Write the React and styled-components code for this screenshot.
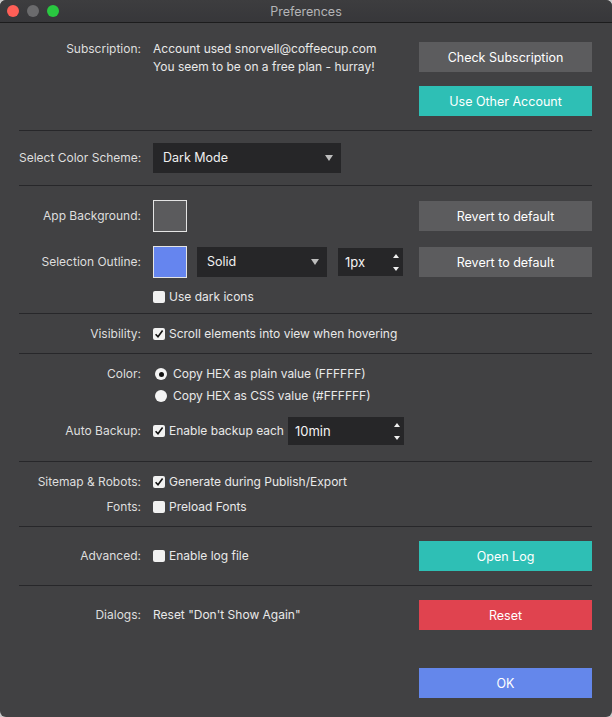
import React from "react";
import styled, { createGlobalStyle } from "styled-components";

const GlobalStyle = createGlobalStyle`
  html, body {
    margin: 0;
    padding: 0;
    background: #c9c9c9;
  }
  body {
    font-family: "Inter", "Roboto", "Liberation Sans", sans-serif;
    font-size: 12px;
    -webkit-font-smoothing: antialiased;
  }
`;

const Window = styled.div`
  width: 612px;
  height: 717px;
  box-sizing: border-box;
  background: #414143;
  border-radius: 6px;
  overflow: hidden;
  display: flex;
  flex-direction: column;
  color: #e9e9e9;
`;

const TitleBar = styled.div`
  height: 22px;
  flex: none;
  position: relative;
  display: flex;
  align-items: center;
  justify-content: center;
  background: linear-gradient(#3d3d3f, #37373a);
  border-bottom: 1px solid #1c1c1d;
`;

const Lights = styled.div`
  position: absolute;
  left: 7px;
  top: 5px;
  display: flex;
  gap: 8px;
`;

const Light = styled.span`
  width: 12px;
  height: 12px;
  border-radius: 50%;
  background: ${(p) => p.color};
`;

const Title = styled.div`
  font-size: 12.5px;
  color: #b4b4b6;
`;

const Body = styled.div`
  padding: 0 20px 0 19px;
  display: flex;
  flex-direction: column;
`;

const Section = styled.div`
  padding: ${(p) => p.pad || "12px 0"};
  display: flex;
  flex-direction: column;
  gap: ${(p) => p.gap || "0px"};
`;

const Divider = styled.div`
  height: 1px;
  background: #27272a;
`;

const Row = styled.div`
  display: grid;
  grid-template-columns: 122px 1fr 173px;
  column-gap: 12px;
  align-items: ${(p) => (p.top ? "start" : "center")};
  min-height: ${(p) => p.h || "18px"};
  margin-top: ${(p) => p.mt || "0px"};
`;

const Label = styled.div`
  grid-column: 1;
  text-align: right;
  white-space: nowrap;
  line-height: 18px;
  color: #dedede;
`;

const Field = styled.div`
  grid-column: 2;
  display: flex;
  align-items: center;
  gap: ${(p) => p.gap || "4px"};
  line-height: 18px;
  white-space: nowrap;
`;

const Lines = styled.div`
  grid-column: 2;
  line-height: 18px;
  white-space: nowrap;
`;

const Actions = styled.div`
  grid-column: 3;
  display: flex;
  flex-direction: column;
  gap: 14px;
  padding-top: ${(p) => p.offset || "0px"};
`;

const tones = {
  grey: "#5c5c5e",
  teal: "#2ebfb5",
  red: "#e0434f",
  blue: "#6487eb",
};

const Button = styled.button`
  grid-column: 3;
  height: 30px;
  width: 100%;
  border: none;
  border-radius: 0;
  background: ${(p) => tones[p.tone || "grey"]};
  color: #ffffff;
  font-family: inherit;
  font-size: 12.5px;
  font-weight: 400;
  padding: 0;
  cursor: pointer;
`;

const Select = styled.div`
  width: ${(p) => p.w}px;
  height: 30px;
  box-sizing: border-box;
  background: #262628;
  display: flex;
  align-items: center;
  justify-content: space-between;
  padding: 0 8px 0 10px;
  font-size: 12.5px;
  color: #f0f0f0;
`;

const Caret = styled.span`
  width: 0;
  height: 0;
  border-left: 4px solid transparent;
  border-right: 4px solid transparent;
  border-top: 6px solid #bdbdbd;
`;

const Spinner = styled.div`
  width: ${(p) => p.w}px;
  height: 28px;
  box-sizing: border-box;
  background: #262628;
  display: flex;
  align-items: center;
  justify-content: space-between;
  padding: 0 4px 0 7px;
  margin-left: ${(p) => p.ml || "0px"};
  font-size: 13px;
  color: #f4f4f4;
`;

const Steps = styled.span`
  display: flex;
  flex-direction: column;
  gap: 9px;
  &::before,
  &::after {
    content: "";
    width: 0;
    height: 0;
    border-left: 3px solid transparent;
    border-right: 3px solid transparent;
  }
  &::before {
    border-bottom: 4px solid #f0f0f0;
  }
  &::after {
    border-top: 4px solid #f0f0f0;
  }
`;

const Swatch = styled.div`
  width: 34px;
  height: 32px;
  box-sizing: border-box;
  background: ${(p) => p.color};
  border: 1px solid #e4e4e4;
  flex: none;
`;

const Box = styled.span`
  width: 12px;
  height: 12px;
  border-radius: 2px;
  background: #f1f1f1;
  flex: none;
  display: inline-flex;
  align-items: center;
  justify-content: center;
`;

const Radio = styled.span`
  width: 12px;
  height: 12px;
  border-radius: 50%;
  background: #f4f4f4;
  flex: none;
  margin: 0 1px 0 2px;
  display: inline-flex;
  align-items: center;
  justify-content: center;
  &::after {
    content: "";
    width: 5px;
    height: 5px;
    border-radius: 50%;
    background: ${(p) => (p.on ? "#111" : "transparent")};
  }
`;

const Check = ({ on }) => (
  <Box>
    {on && (
      <svg width="10" height="10" viewBox="0 0 10 10">
        <path d="M1.6 5.2 L4 7.8 L8.6 1.6" fill="none" stroke="#111" strokeWidth="1.6" />
      </svg>
    )}
  </Box>
);

export default function App() {
  return (
    <>
      <GlobalStyle />
      <Window>
        <TitleBar>
          <Lights>
            <Light color="#fe5f57" />
            <Light color="#6b6b6d" />
            <Light color="#29c840" />
          </Lights>
          <Title>Preferences</Title>
        </TitleBar>
        <Body>
          <Section pad="17px 0 14px">
            <Row top>
              <Label>Subscription:</Label>
              <Lines>
                Account used snorvell@coffeecup.com
                <br />
                You seem to be on a free plan - hurray!
              </Lines>
              <Actions offset="2px">
                <Button tone="grey">Check Subscription</Button>
                <Button tone="teal">Use Other Account</Button>
              </Actions>
            </Row>
          </Section>
          <Divider />
          <Section pad="12px 0">
            <Row h="30px">
              <Label>Select Color Scheme:</Label>
              <Field>
                <Select w={188}>
                  Dark Mode
                  <Caret />
                </Select>
              </Field>
            </Row>
          </Section>
          <Divider />
          <Section pad="14px 0 7px">
            <Row h="32px">
              <Label>App Background:</Label>
              <Field>
                <Swatch color="#5b5b5d" />
              </Field>
              <Button tone="grey">Revert to default</Button>
            </Row>
            <Row h="32px" mt="14px">
              <Label>Selection Outline:</Label>
              <Field gap="10px">
                <Swatch color="#6585ef" />
                <Select w={130}>
                  Solid
                  <Caret />
                </Select>
                <Spinner w={65} ml="1px">
                  1px
                  <Steps />
                </Spinner>
              </Field>
              <Button tone="grey">Revert to default</Button>
            </Row>
            <Row mt="10px">
              <Field>
                <Check />
                Use dark icons
              </Field>
            </Row>
          </Section>
          <Divider />
          <Section pad="11px 0 10px">
            <Row>
              <Label>Visibility:</Label>
              <Field>
                <Check on />
                Scroll elements into view when hovering
              </Field>
            </Row>
          </Section>
          <Divider />
          <Section pad="11px 0 16px">
            <Row>
              <Label>Color:</Label>
              <Field gap="5px">
                <Radio on />
                Copy HEX as plain value (FFFFFF)
              </Field>
            </Row>
            <Row mt="4px">
              <Field gap="5px">
                <Radio />
                Copy HEX as CSS value (#FFFFFF)
              </Field>
            </Row>
            <Row h="28px" mt="12px">
              <Label>Auto Backup:</Label>
              <Field>
                <Check on />
                Enable backup each
                <Spinner w={116}>
                  10min
                  <Steps />
                </Spinner>
              </Field>
            </Row>
          </Section>
          <Divider />
          <Section pad="11px 0 10px" gap="7px">
            <Row>
              <Label>Sitemap &amp; Robots:</Label>
              <Field>
                <Check on />
                Generate during Publish/Export
              </Field>
            </Row>
            <Row>
              <Label>Fonts:</Label>
              <Field>
                <Check />
                Preload Fonts
              </Field>
            </Row>
          </Section>
          <Divider />
          <Section pad="14px 0">
            <Row h="30px">
              <Label>Advanced:</Label>
              <Field>
                <Check />
                Enable log file
              </Field>
              <Button tone="teal">Open Log</Button>
            </Row>
          </Section>
          <Divider />
          <Section pad="14px 0" gap="38px">
            <Row h="30px">
              <Label>Dialogs:</Label>
              <Field>Reset "Don't Show Again"</Field>
              <Button tone="red">Reset</Button>
            </Row>
            <Row h="30px">
              <Button tone="blue">OK</Button>
            </Row>
          </Section>
        </Body>
      </Window>
    </>
  );
}
